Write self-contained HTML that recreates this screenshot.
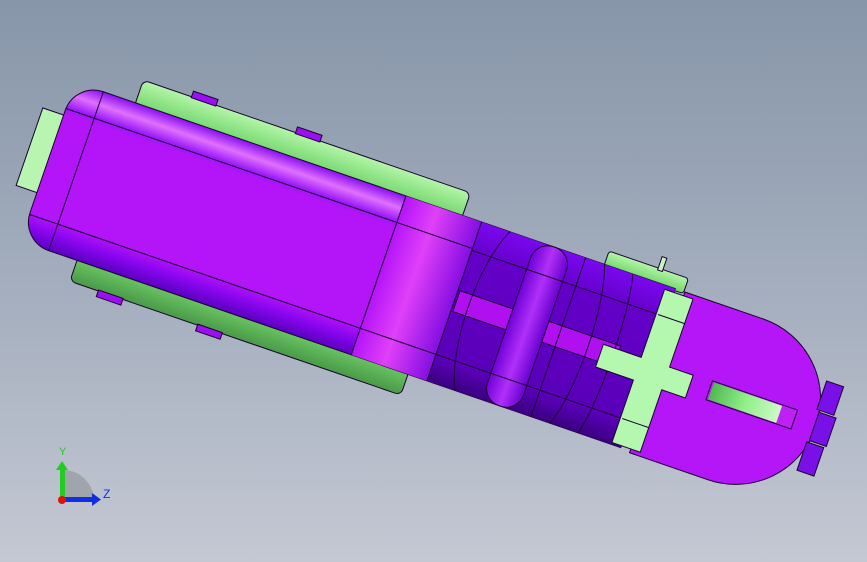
<!DOCTYPE html>
<html><head><meta charset="utf-8"><style>
html,body{margin:0;padding:0;width:867px;height:562px;overflow:hidden;}
body{background:linear-gradient(#8796a9 0%,#a3adbd 50%,#c4c8d3 100%);}
svg{position:absolute;left:0;top:0;}
</style></head><body>
<svg width="867" height="562" viewBox="0 0 867 562" xmlns="http://www.w3.org/2000/svg">
<defs>
<linearGradient id="bodyV" x1="0" y1="0" x2="0" y2="1">
<stop offset="0" stop-color="#8a10f0"/>
<stop offset="0.08" stop-color="#e070ff"/>
<stop offset="0.16" stop-color="#9a18f8"/>
<stop offset="0.2" stop-color="#b414f8"/>
<stop offset="0.82" stop-color="#b414f8"/>
<stop offset="0.9" stop-color="#8a06f0"/>
<stop offset="1" stop-color="#5a00c0"/>
</linearGradient>
<linearGradient id="trans" x1="0" y1="0" x2="1" y2="0">
<stop offset="0" stop-color="#b414f8"/>
<stop offset="0.4" stop-color="#e040f8"/>
<stop offset="1" stop-color="#7a08e0"/>
</linearGradient>
<linearGradient id="dark" x1="0" y1="0" x2="0" y2="1">
<stop offset="0" stop-color="#7a08f0"/>
<stop offset="0.2" stop-color="#6400c8"/>
<stop offset="0.85" stop-color="#5a00b8"/>
<stop offset="1" stop-color="#3a0080"/>
</linearGradient>
<linearGradient id="pill" x1="0" y1="0" x2="1" y2="0">
<stop offset="0" stop-color="#7000d8"/>
<stop offset="0.5" stop-color="#b030f8"/>
<stop offset="1" stop-color="#6a00d0"/>
</linearGradient>
<linearGradient id="gTop" x1="0" y1="0" x2="0" y2="1">
<stop offset="0" stop-color="#b4f5a8"/>
<stop offset="1" stop-color="#70d66a"/>
</linearGradient>
<linearGradient id="gBot" x1="0" y1="0" x2="0" y2="1">
<stop offset="0" stop-color="#a8f09c"/>
<stop offset="0.3" stop-color="#66c060"/>
<stop offset="1" stop-color="#4a9a48"/>
</linearGradient>
<linearGradient id="slot" x1="0" y1="0" x2="1" y2="0">
<stop offset="0" stop-color="#50b850"/>
<stop offset="0.5" stop-color="#90f088"/>
<stop offset="1" stop-color="#d0f8c8"/>
</linearGradient>
</defs>
<g transform="translate(75,82) rotate(19)" stroke="#1a0030" stroke-width="1">
<rect x="64" y="-24" width="346" height="28" rx="6" fill="url(#gTop)"/>
<rect x="60" y="160" width="350" height="30" rx="6" fill="url(#gBot)"/>
<rect x="115" y="-30" width="26" height="7" fill="#9a10f0"/>
<rect x="225" y="-30" width="26" height="7" fill="#9a10f0"/>
<rect x="90" y="189" width="26" height="7" fill="#9a10f0"/>
<rect x="195" y="189" width="26" height="7" fill="#9a10f0"/>
<rect x="-22" y="35" width="24" height="82" fill="#b8f5b0"/>
<rect x="560" y="-14" width="84" height="16" rx="3" fill="url(#gTop)"/>
<rect x="612" y="-26" width="5" height="14" fill="#c8f5c0"/>
<path d="M645 0 H728 A85 85 0 0 1 728 170 H645 Z" fill="#b416f8"/>
<rect x="808" y="38" width="18" height="30" fill="#7a10e8"/>
<rect x="811" y="70" width="18" height="30" fill="#7a10e8"/>
<rect x="809" y="102" width="18" height="30" fill="#7a10e8"/>
<rect x="700" y="75" width="90" height="20" fill="#c020f8"/>
<rect x="702" y="76" width="72" height="18" fill="url(#slot)" stroke="none"/>
<path d="M30 0 H635 V168 H30 A30 30 0 0 1 0 138 V30 A30 30 0 0 1 30 0 Z" fill="url(#bodyV)"/>
<rect x="350" y="0" width="85" height="168" fill="url(#trans)" stroke="none"/>
<rect x="430" y="0" width="205" height="168" fill="url(#dark)" stroke="none"/>
<rect x="432" y="72" width="170" height="22" fill="#b010f0"/>
<rect x="488" y="0" width="38" height="168" rx="18" fill="url(#pill)"/>
<path d="M460 0 C440 40 440 130 460 168 M560 0 C575 40 575 130 560 168 M590 0 C600 40 600 130 590 168" fill="none"/>
<line x1="430" y1="30" x2="635" y2="30"/>
<line x1="430" y1="140" x2="635" y2="140"/>
<line x1="540" y1="0" x2="540" y2="168"/>
<line x1="0" y1="28" x2="430" y2="28"/>
<line x1="0" y1="140" x2="430" y2="140"/>
<line x1="30" y1="0" x2="30" y2="168"/>
<line x1="350" y1="0" x2="350" y2="168"/>
<line x1="430" y1="0" x2="430" y2="168"/>
<path d="M625 4 H655 V76 H680 V100 H655 V166 H625 V100 H585 V76 H625 Z" fill="#b4f8b0"/>
<line x1="627" y1="30" x2="655" y2="30"/>
<line x1="627" y1="140" x2="655" y2="140"/>
</g>
<path d="M63 500 V470 A31 31 0 0 1 94 500 Z" fill="#9fa4ad"/>
<rect x="60" y="468" width="5" height="32" fill="#22cc22"/>
<polygon points="56,470 62,461 68,470" fill="#22cc22"/>
<rect x="63" y="497" width="30" height="5" fill="#1030e0"/>
<polygon points="92,493 101,499.5 92,506" fill="#1030e0"/>
<circle cx="62" cy="500" r="4" fill="#e01010"/>
<text x="59" y="455" font-family="Liberation Sans,sans-serif" font-size="11" fill="#22cc22">Y</text>
<text x="103" y="498" font-family="Liberation Sans,sans-serif" font-size="12" fill="#1030e0">Z</text>
</svg>
</body></html>
